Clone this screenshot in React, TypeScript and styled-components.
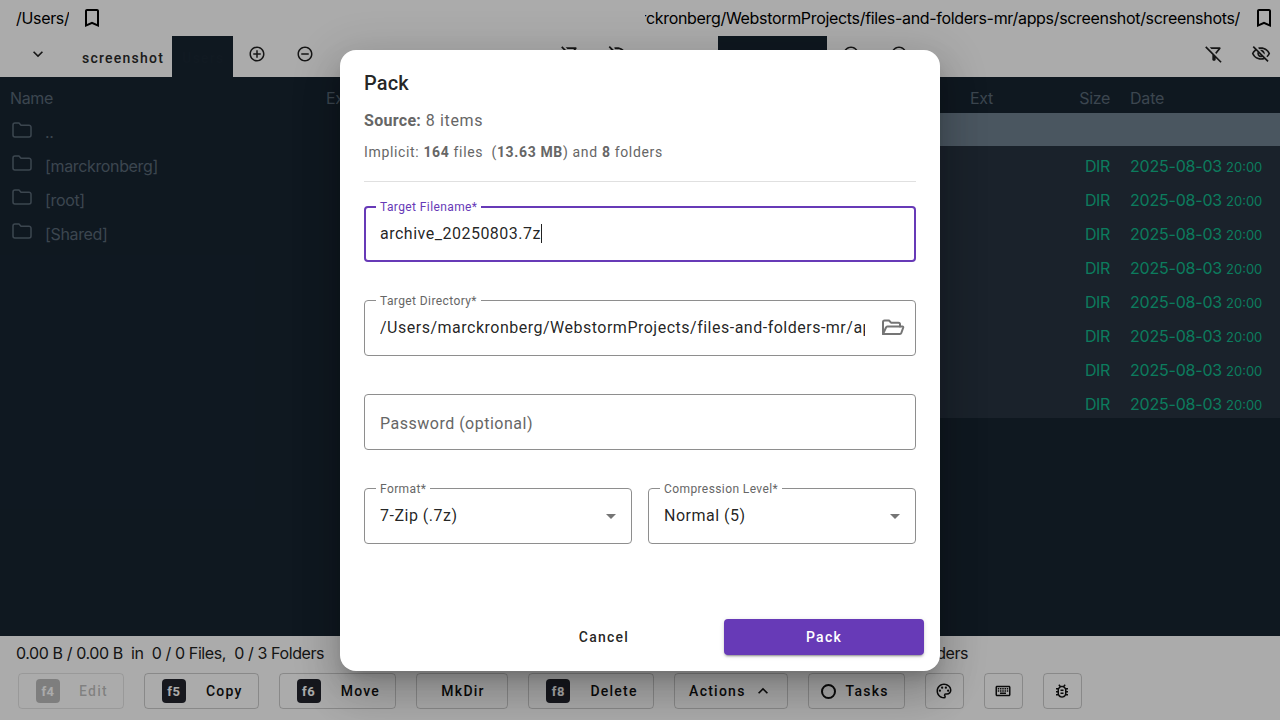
import React from 'react';
import styled, { createGlobalStyle } from 'styled-components';
import {
  MdOutlineBookmarkBorder,
  MdExpandMore,
  MdOutlineAddCircleOutline,
  MdOutlineRemoveCircleOutline,
  MdOutlineFilterAltOff,
  MdOutlineVisibilityOff,
  MdArrowDropDown,
  MdKeyboardArrowUp,
  MdOutlinePalette,
  MdOutlineKeyboard,
  MdOutlineBugReport,
} from 'react-icons/md';

const Global = createGlobalStyle`
  html, body { margin: 0; padding: 0; height: 100%; overflow: hidden; }
  body { font-family: Inter, "Liberation Sans", sans-serif; background: #fff; color: #111; }
  * { box-sizing: border-box; }
`;

const Page = styled.div`
  position: relative;
  width: 1280px;
  height: 720px;
  display: flex;
  flex-direction: column;
  overflow: hidden;
`;

const Panes = styled.div`
  display: grid;
  grid-template-columns: 636px 640px;
  column-gap: 4px;
`;

const PathBar = styled.div<{ $right?: boolean }>`
  height: 36px;
  display: flex;
  align-items: center;
  font-size: 16px;
  padding-left: ${(p) => (p.$right ? '5px' : '16px')};
  padding-right: 4px;
  gap: ${(p) => (p.$right ? 12 : 11)}px;
  color: #000;
`;

const PathText = styled.div<{ $fill?: boolean }>`
  min-width: 0;
  overflow: hidden;
  white-space: nowrap;
  display: flex;
  justify-content: flex-end;
  letter-spacing: -0.32px;
  flex: ${(p) => (p.$fill ? 1 : '0 0 auto')};
`;

const Mark = styled.span`
  display: inline-flex;
  font-size: 24px;
  color: #000;
`;

const Toolbar = styled.div`
  height: 41px;
  display: flex;
  align-items: stretch;
  padding-right: 9px;
`;

const Chevron = styled.div<{ $wide?: boolean }>`
  width: ${(p) => (p.$wide ? '78px' : '72px')};
  padding-left: 28px;
  padding-bottom: 6px;
  display: flex;
  align-items: center;
  font-size: 20px;
  color: #222;
`;

const Tab = styled.div<{ $active?: boolean }>`
  font-family: Roboto, sans-serif;
  font-size: 14px;
  font-weight: 500;
  letter-spacing: 1.25px;
  padding: 2px 8px 0 10px;
  display: flex;
  align-items: center;
  color: ${(p) => (p.$active ? '#1a2733' : '#2a2a2a')};
  background: ${(p) => (p.$active ? '#172431' : 'transparent')};
`;

const ToolIcon = styled.div`
  width: 48px;
  display: flex;
  align-items: center;
  justify-content: center;
  padding-bottom: 6px;
  font-size: 18px;
  color: #222;
`;

const Spacer = styled.div`
  flex: 1;
`;

const EndIcons = styled.div`
  display: flex;
  gap: 27px;
`;

const EndIcon = styled.div`
  width: 20px;
  display: flex;
  align-items: center;
  justify-content: center;
  padding-bottom: 6px;
  font-size: 20px;
  color: #222;
`;

const Table = styled.div`
  height: 559px;
  background: #172431;
  font-size: 16px;
  letter-spacing: -0.35px;
  color: #5a6977;
`;

const Row = styled.div<{ $tone?: 'focus' | 'sel'; $head?: boolean; $first?: boolean }>`
  display: grid;
  grid-template-columns: 1fr 70px 70px 170px;
  align-items: center;
  height: ${(p) => (p.$head ? '36px' : p.$first ? '33px' : '34px')};
  padding-left: 10px;
  padding-top: ${(p) => (p.$head ? '6px' : '5px')};
  background: ${(p) => (p.$tone === 'focus' ? '#6f818f' : p.$tone === 'sel' ? '#273340' : 'transparent')};
`;

const NameCell = styled.div`
  display: flex;
  align-items: center;
  gap: 13px;
  padding-left: 2px;
  white-space: nowrap;
`;

const FolderGlyph = styled.svg`
  flex: none;
  width: 20px;
  height: 16px;
  margin-top: -5px;
  fill: none;
  stroke: #5a6977;
  stroke-width: 1.5;
`;

const SizeCell = styled.div<{ $green?: boolean }>`
  text-align: right;
  color: ${(p) => (p.$green ? '#12b98c' : 'inherit')};
`;

const DateCell = styled.div<{ $green?: boolean }>`
  padding-left: 20px;
  white-space: nowrap;
  letter-spacing: -0.2px;
  color: ${(p) => (p.$green ? '#12b98c' : 'inherit')};
`;

const Time = styled.span`
  font-size: 13px;
  margin-left: 4px;
  letter-spacing: 0;
`;

const StatusRow = styled.div<{ $nudge?: boolean }>`
  height: 34px;
  display: flex;
  align-items: center;
  padding-left: ${(p) => (p.$nudge ? 20 : 16)}px;
  font-size: 16px;
  letter-spacing: -0.4px;
  white-space: pre;
  color: #222;
`;

const ActionBar = styled.div`
  flex: 1;
  display: flex;
  align-items: flex-start;
  gap: 20px;
  padding: 3px 0 0 18px;
`;

const ActionButton = styled.div<{ $muted?: boolean; $min?: number; $icon?: boolean; $gap?: number; $pad?: number }>`
  height: 36px;
  min-width: ${(p) => (p.$min ? `${p.$min}px` : '0')};
  padding: 0 ${(p) => (p.$icon ? 0 : p.$pad ?? 15)}px 0 ${(p) => (p.$icon ? 0 : p.$pad ?? 17)}px;
  display: flex;
  align-items: center;
  justify-content: center;
  gap: ${(p) => p.$gap ?? 20}px;
  border: 1px solid ${(p) => (p.$muted ? 'rgba(0,0,0,0.1)' : 'rgba(0,0,0,0.2)')};
  border-radius: 4px;
  font-family: Roboto, sans-serif;
  font-size: 14px;
  font-weight: 500;
  letter-spacing: 1.25px;
  color: ${(p) => (p.$muted ? 'rgba(0,0,0,0.26)' : '#111')};
  & > svg { flex: none; }
`;

const Key = styled.span<{ $muted?: boolean }>`
  width: 24px;
  height: 24px;
  border-radius: 4px;
  display: flex;
  align-items: center;
  justify-content: center;
  font-size: 13px;
  font-weight: 700;
  letter-spacing: 0.5px;
  color: #fff;
  background: ${(p) => (p.$muted ? 'rgba(0,0,0,0.26)' : '#23252e')};
`;

const TaskRing = styled.span`
  width: 15px;
  height: 15px;
  margin-left: -5px;
  border: 2px solid #111;
  border-radius: 50%;
`;

const Backdrop = styled.div`
  position: absolute;
  inset: 0;
  background: rgba(0, 0, 0, 0.33);
  display: flex;
  align-items: center;
  justify-content: center;
`;

const Dialog = styled.div`
  width: 600px;
  height: 621px;
  background: #fff;
  border-radius: 16px;
  display: flex;
  flex-direction: column;
  font-family: Roboto, sans-serif;
  color: rgba(0, 0, 0, 0.87);
  box-shadow: 0 11px 15px -7px rgba(0, 0, 0, 0.2), 0 24px 38px 3px rgba(0, 0, 0, 0.14),
    0 9px 46px 8px rgba(0, 0, 0, 0.12);
`;

const Title = styled.h2`
  margin: 0;
  padding: 17px 24px 10px;
  font-size: 20px;
  line-height: 32px;
  font-weight: 500;
  letter-spacing: 0.15px;
`;

const Content = styled.div`
  padding: 0 24px;
  display: flex;
  flex-direction: column;
`;

const SourceLine = styled.div`
  font-size: 16px;
  line-height: 24px;
  letter-spacing: 0.65px;
  color: #666;
  b { font-weight: 700; letter-spacing: 0.3px; }
`;

const ImplicitLine = styled.div`
  margin-top: 8px;
  font-size: 14px;
  line-height: 22px;
  letter-spacing: 0.65px;
  color: #666;
  white-space: pre;
  b { font-weight: 700; }
`;

const Rule = styled.hr`
  margin: 18px 0 24px;
  border: 0;
  border-top: 1px solid #e0e0e0;
`;

const Fields = styled.div`
  display: flex;
  flex-direction: column;
  gap: 38px;
`;

const SelectRow = styled.div`
  display: grid;
  grid-template-columns: 1fr 1fr;
  gap: 16px;
`;

const Field = styled.div<{ $focus?: boolean }>`
  position: relative;
  height: 56px;
  display: flex;
  align-items: center;
  gap: 16px;
  padding: 0 ${(p) => (p.$focus ? 14 : 15)}px;
  border: ${(p) => (p.$focus ? '2px solid #673ab7' : '1px solid #8e8e8e')};
  border-radius: 4px;
  font-size: 16px;
  letter-spacing: 0.5px;
`;

const FieldLabel = styled.label<{ $focus?: boolean }>`
  position: absolute;
  left: ${(p) => (p.$focus ? 10 : 11)}px;
  top: ${(p) => (p.$focus ? -8 : -7)}px;
  padding: 0 4px;
  background: #fff;
  font-size: 12px;
  line-height: 14px;
  letter-spacing: 0.4px;
  color: ${(p) => (p.$focus ? '#673ab7' : '#666')};
`;

const Value = styled.div`
  flex: 1;
  min-width: 0;
  overflow: hidden;
  white-space: nowrap;
  color: rgba(0, 0, 0, 0.87);
`;

const Placeholder = styled.div`
  padding-top: 3px;
  color: #666;
`;

const Caret = styled.span`
  display: inline-block;
  width: 1px;
  height: 19px;
  background: #222;
  vertical-align: -4px;
`;

const FieldIcon = styled.span<{ $arrow?: boolean }>`
  display: inline-flex;
  flex: none;
  margin-right: ${(p) => (p.$arrow ? -7 : -5)}px;
  font-size: 24px;
  color: #757575;
`;

const OpenFolderGlyph = styled.svg`
  width: 24px;
  height: 24px;
  fill: none;
  stroke: #757575;
  stroke-width: 2;
  stroke-linejoin: round;
  stroke-linecap: round;
`;

const Actions = styled.div`
  margin-top: auto;
  padding: 16px;
  display: flex;
  justify-content: flex-end;
  gap: 20px;
`;

const DialogButton = styled.div<{ $primary?: boolean }>`
  width: 200px;
  height: 36px;
  display: flex;
  align-items: center;
  justify-content: center;
  border-radius: 4px;
  font-size: 14px;
  font-weight: 500;
  letter-spacing: 1.25px;
  color: ${(p) => (p.$primary ? '#fff' : 'rgba(0,0,0,0.87)')};
  background: ${(p) => (p.$primary ? '#673ab7' : 'transparent')};
  box-shadow: ${(p) =>
    p.$primary
      ? '0 3px 1px -2px rgba(0,0,0,.2), 0 2px 2px 0 rgba(0,0,0,.14), 0 1px 5px 0 rgba(0,0,0,.12)'
      : 'none'};
`;

const Folder = () => (
  <FolderGlyph viewBox="0 0 20 16">
    <path d="M1 3a2 2 0 0 1 2-2h4l2 2.2h8a2 2 0 0 1 2 2V13a2 2 0 0 1-2 2H3a2 2 0 0 1-2-2z" strokeLinejoin="round" />
  </FolderGlyph>
);

const OpenFolder = () => (
  <OpenFolderGlyph viewBox="0 0 24 24">
    <path d="M2 18V6a1.5 1.5 0 0 1 1.5-1.5H8l2 2.2h7.5A1.5 1.5 0 0 1 19 8.2V10.5" />
    <path d="M2 18l3-6.5a1.5 1.5 0 0 1 1.4-1H21.5a.8.8 0 0 1 .75 1L20.3 17a1.5 1.5 0 0 1-1.4 1z" />
  </OpenFolderGlyph>
);

const leftRows = ['..', '[marckronberg]', '[root]', '[Shared]'];
const rightRows = Array.from({ length: 8 });

const LongPath = '/Users/marckronberg/WebstormProjects/files-and-folders-mr/apps/screenshot/screenshots/';

const PanelEndIcons = () => (
  <EndIcons>
    <EndIcon><MdOutlineFilterAltOff /></EndIcon>
    <EndIcon><MdOutlineVisibilityOff /></EndIcon>
  </EndIcons>
);

export default function App() {
  return (
    <Page>
      <Global />
      <Panes>
        <div>
          <PathBar>
            <PathText>/Users/</PathText>
            <Mark><MdOutlineBookmarkBorder /></Mark>
          </PathBar>
          <Toolbar>
            <Chevron><MdExpandMore /></Chevron>
            <Tab>screenshot</Tab>
            <Tab $active>Users</Tab>
            <ToolIcon><MdOutlineAddCircleOutline /></ToolIcon>
            <ToolIcon><MdOutlineRemoveCircleOutline /></ToolIcon>
            <Spacer />
            <PanelEndIcons />
          </Toolbar>
          <Table>
            <Row $head>
              <div>Name</div>
              <div>Ext</div>
              <SizeCell>Size</SizeCell>
              <DateCell>Date</DateCell>
            </Row>
            {leftRows.map((name, i) => (
              <Row key={name} $first={i === 0}>
                <NameCell><Folder />{name}</NameCell>
              </Row>
            ))}
          </Table>
        </div>
        <div>
          <PathBar $right>
            <PathText $fill>{LongPath}</PathText>
            <Mark><MdOutlineBookmarkBorder /></Mark>
          </PathBar>
          <Toolbar>
            <Chevron $wide />
            <Tab $active>screenshots</Tab>
            <ToolIcon><MdOutlineAddCircleOutline /></ToolIcon>
            <ToolIcon><MdOutlineRemoveCircleOutline /></ToolIcon>
            <Spacer />
            <PanelEndIcons />
          </Toolbar>
          <Table>
            <Row $head>
              <div>Name</div>
              <div>Ext</div>
              <SizeCell>Size</SizeCell>
              <DateCell>Date</DateCell>
            </Row>
            <Row $tone="focus" $first />
            {rightRows.map((_, i) => (
              <Row key={i} $tone="sel">
                <div />
                <div />
                <SizeCell $green>DIR</SizeCell>
                <DateCell $green>2025-08-03<Time>20:00</Time></DateCell>
              </Row>
            ))}
          </Table>
        </div>
      </Panes>
      <Panes>
        <StatusRow>0.00 B / 0.00 B  in  0 / 0 Files,  0 / 3 Folders</StatusRow>
        <StatusRow $nudge>0.00 B / 0.00 B  in  0 / 0 Files,  0 / 8 Folders</StatusRow>
      </Panes>
      <ActionBar>
        <ActionButton $muted $gap={19}><Key $muted>f4</Key>Edit</ActionButton>
        <ActionButton><Key>f5</Key>Copy</ActionButton>
        <ActionButton><Key>f6</Key>Move</ActionButton>
        <ActionButton $min={92}>MkDir</ActionButton>
        <ActionButton $min={126}><Key>f8</Key>Delete</ActionButton>
        <ActionButton $pad={14} $gap={7}>Actions<MdKeyboardArrowUp size={20} /></ActionButton>
        <ActionButton $gap={10}><TaskRing />Tasks</ActionButton>
        <ActionButton $icon $min={39}><MdOutlinePalette size={18} /></ActionButton>
        <ActionButton $icon $min={39}><MdOutlineKeyboard size={18} /></ActionButton>
        <ActionButton $icon $min={39}><MdOutlineBugReport size={18} /></ActionButton>
      </ActionBar>
      <Backdrop>
        <Dialog>
          <Title>Pack</Title>
          <Content>
            <SourceLine><b>Source:</b> 8 items</SourceLine>
            <ImplicitLine>Implicit: <b>164</b> files  (<b>13.63 MB</b>) and <b>8</b> folders</ImplicitLine>
            <Rule />
            <Fields>
              <Field $focus>
                <FieldLabel $focus>Target Filename*</FieldLabel>
                <Value>archive_20250803.7z<Caret /></Value>
              </Field>
              <Field>
                <FieldLabel>Target Directory*</FieldLabel>
                <Value>/Users/marckronberg/WebstormProjects/files-and-folders-mr/apps/screenshot/screenshots/</Value>
                <FieldIcon><OpenFolder /></FieldIcon>
              </Field>
              <Field>
                <Placeholder>Password (optional)</Placeholder>
              </Field>
              <SelectRow>
                <Field>
                  <FieldLabel>Format*</FieldLabel>
                  <Value>7-Zip (.7z)</Value>
                  <FieldIcon $arrow><MdArrowDropDown /></FieldIcon>
                </Field>
                <Field>
                  <FieldLabel>Compression Level*</FieldLabel>
                  <Value>Normal (5)</Value>
                  <FieldIcon $arrow><MdArrowDropDown /></FieldIcon>
                </Field>
              </SelectRow>
            </Fields>
          </Content>
          <Actions>
            <DialogButton>Cancel</DialogButton>
            <DialogButton $primary>Pack</DialogButton>
          </Actions>
        </Dialog>
      </Backdrop>
    </Page>
  );
}
